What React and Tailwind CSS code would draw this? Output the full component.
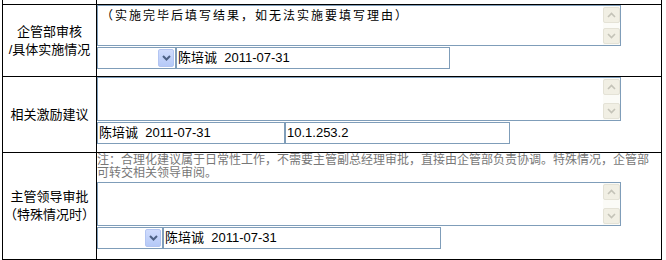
const font = { fontFamily: '"Liberation Sans", "Noto Sans CJK SC", sans-serif' }

function Chevron({ up, color, w = 9, h = 6, sw = 1.6 }) {
  return (
    <svg width={w} height={h} viewBox="0 0 9 6">
      <path
        d={up ? 'M1 5 L4.5 1.5 L8 5' : 'M1 1 L4.5 4.5 L8 1'}
        stroke={color}
        strokeWidth={sw}
        fill="none"
      />
    </svg>
  )
}

function ScrollBar() {
  return (
    <div className="w-[17px] flex flex-col justify-between bg-[#fbfbf7] py-[1px]">
      <div className="h-[16px] rounded-[2px] border border-[#e4e2d6] bg-[#f1efe4] flex items-center justify-center">
        <Chevron up color="#c4c3b8" />
      </div>
      <div className="h-[16px] rounded-[2px] border border-[#e4e2d6] bg-[#f1efe4] flex items-center justify-center">
        <Chevron color="#c4c3b8" />
      </div>
    </div>
  )
}

function TextBox({ h, children }) {
  return (
    <div className={`w-[524px] ${h} border border-[#7f9db9] bg-white flex`}>
      <div className="flex-1 pl-[3px] pt-[2px] text-[12px] tracking-[2px] text-black leading-[16px]">
        {children}
      </div>
      <ScrollBar />
    </div>
  )
}

function Select({ w }) {
  return (
    <div className={`${w} h-[22px] border border-[#7f9db9] bg-white flex items-center justify-end pr-[1px]`}>
      <div className="w-[16px] h-[18px] rounded-[2px] border border-[#b3c5f2] bg-gradient-to-b from-[#d0dcfd] to-[#b5c9f7] flex items-center justify-center">
        <Chevron color="#4d6185" sw={2} />
      </div>
    </div>
  )
}

function Input({ w, children }) {
  return (
    <div className={`${w} h-[22px] border border-[#7f9db9] bg-white flex items-center pl-[1px] text-[13px] text-black whitespace-pre`}>
      {children}
    </div>
  )
}

function Label({ children }) {
  return (
    <div className="w-[94px] border-r border-black flex flex-col items-center justify-center text-[13px] leading-[18px] text-black">
      {children}
    </div>
  )
}

export default function App() {
  return (
    <div className="w-[666px] h-[260px] bg-white overflow-hidden pl-[2px]" style={font}>
      <div className="w-[660px] border-l border-r border-b border-black">
        {/* tail of the row above */}
        <div className="h-[4px] flex">
          <div className="w-[94px] border-r border-black"></div>
        </div>

        {/* 企管部审核 */}
        <div className="flex h-[72px] border-t border-black">
          <Label>
            <span>企管部审核</span>
            <span>/具体实施情况</span>
          </Label>
          <div className="flex-1 flex flex-col gap-[1px]">
            <TextBox h="h-[41px]">（实施完毕后填写结果，如无法实施要填写理由）</TextBox>
            <div className="flex">
              <Select w="w-[79px]" />
              <Input w="w-[274px]">陈培诚  2011-07-31</Input>
            </div>
          </div>
        </div>

        {/* 相关激励建议 */}
        <div className="flex h-[76px] border-t border-black">
          <Label>
            <span>相关激励建议</span>
          </Label>
          <div className="flex-1 flex flex-col gap-[1px]">
            <TextBox h="h-[44px]" />
            <div className="flex">
              <Input w="w-[188px]">陈培诚  2011-07-31</Input>
              <Input w="w-[225px]">10.1.253.2</Input>
            </div>
          </div>
        </div>

        {/* 主管领导审批 */}
        <div className="flex h-[107px] border-t border-black">
          <Label>
            <span>主管领导审批</span>
            <span>（特殊情况时）</span>
          </Label>
          <div className="flex-1 flex flex-col">
            <div className="h-[29px] pt-[1px] text-[12px] leading-[13px] text-[#777777]">
              注：合理化建议属于日常性工作，不需要主管副总经理审批，直接由企管部负责协调。特殊情况，企管部
              <br />
              可转交相关领导审阅。
            </div>
            <TextBox h="h-[44px]" />
            <div className="flex mt-[1px]">
              <Select w="w-[66px]" />
              <Input w="w-[278px]">陈培诚  2011-07-31</Input>
            </div>
          </div>
        </div>
      </div>
    </div>
  )
}
